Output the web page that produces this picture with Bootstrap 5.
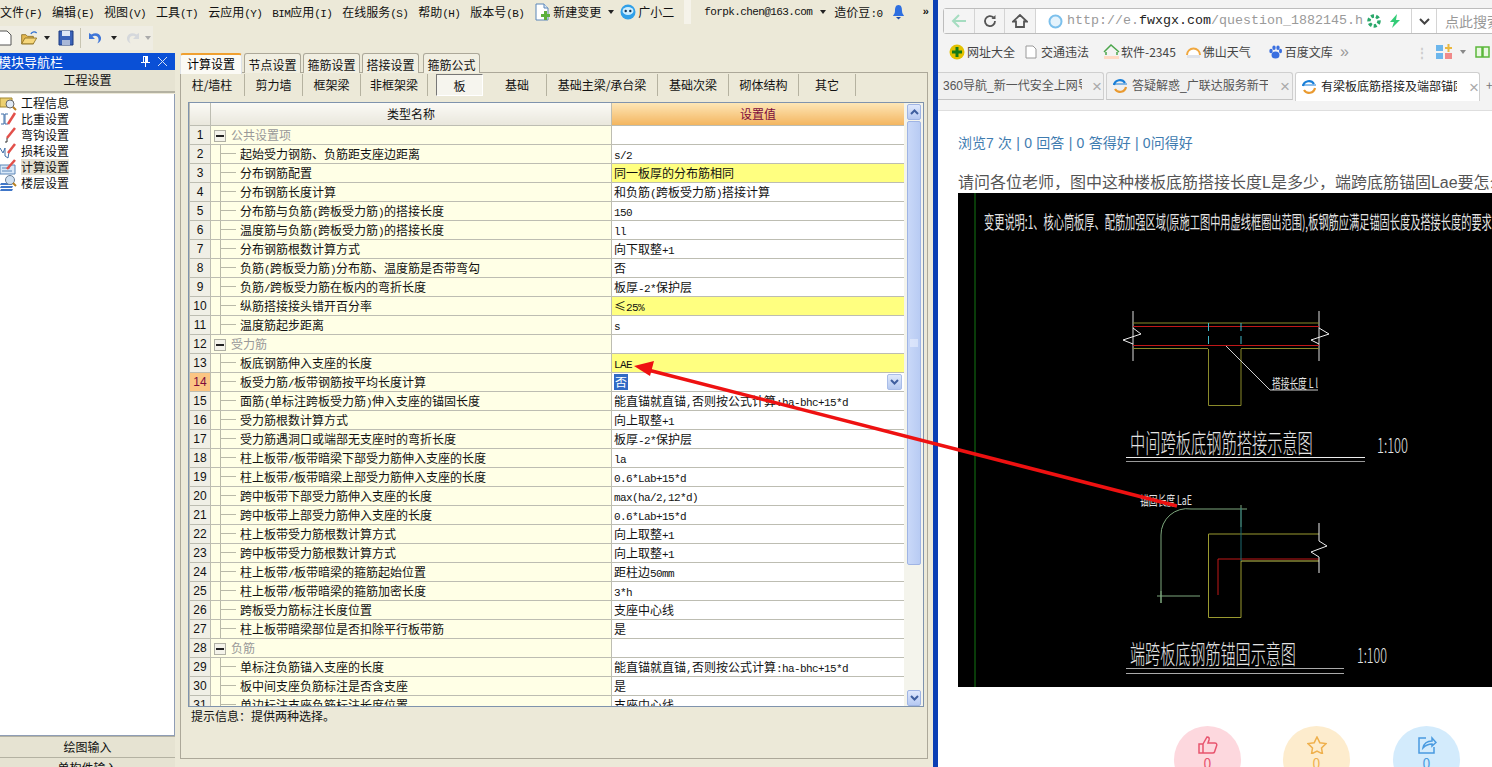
<!DOCTYPE html>
<html lang="zh">
  <head>
    <meta charset="utf-8" />
    <title>计算设置</title>
    <link href="https://cdn.jsdelivr.net/npm/bootstrap@5.3.3/dist/css/bootstrap.min.css" rel="stylesheet" />
    <style>
      html, body { height: 767px; overflow: hidden; margin: 0; }
      body { font-family: "Noto Sans CJK SC", sans-serif; font-size: 12px; line-height: 16px; color: #111; background: #fff; }
      .latin { font-family: "Liberation Mono", monospace; font-size: 11px; letter-spacing: -0.6px; line-height: 0; }
      svg { display: block; flex: none; }

      .screen { width: 1492px; height: 767px; }
      .app-pane { width: 938px; height: 767px; flex: none; background: #ece9d8; border-right: 5px solid #0b3fb4; overflow: hidden; }
      .menu-row { height: 26px; padding-bottom: 2px; gap: 10px; white-space: nowrap; flex: none; }
      .tool-row { height: 24px; width: 153px; background: #efede3; gap: 4px; flex: none; }
      .tool-sep { width: 1px; height: 20px; background: #c8c5b2; margin: 0 2px; }
      .caret-down { width: 0; height: 0; border: 3px solid transparent; border-top: 4px solid #222; border-bottom: 0; flex: none; }
      .caret-off { border-top-color: #aaa; }
      .work-row { margin-top: 3px; height: 714px; flex: none; }

      .nav-side { width: 175px; flex: none; height: 714px; overflow: hidden; }
      .dock-title { height: 17px; flex: none; background: #0a50d6; color: #fff; font-size: 13px; padding-right: 8px; margin-left: -2px; overflow: hidden; }
      .side-head { height: 23px; flex: none; line-height: 20px; text-align: center; background: #e6e3d2; border-bottom: 2px solid #b4b2a2; }
      .side-list { height: 642px; flex: none; background: #fff; border-right: 1px solid #8f9db5; border-bottom: 1px solid #8f9db5; border-radius: 0; display: block; margin-top: 1px; padding-top: 1px; }
      .side-list .list-group-item { border: 0; padding: 0; height: 16px; background: transparent; gap: 4px; font-size: 12px; line-height: 16px; color: #111; }
      .side-on { background: #e4e1d2; }
      .side-btn { height: 21px; flex: none; line-height: 20px; text-align: center; background: #e6e3d2; border-top: 1px solid #b4b2a2; }

      .settings-pane { width: 748px; margin-left: 5px; flex: none; }
      .top-tabs { height: 20px; border: 0; gap: 2px; flex-wrap: nowrap; }
      .top-tabs .nav-link { height: 20px; padding: 3px 0 0; margin: 0; width: 57px; text-align: center; background: #f1efe2; color: #111; border: 1px solid #aca899; border-bottom: 0; border-radius: 3px 3px 0 0; font-size: 12px; line-height: 16px; }
      .top-tabs .nav-link.active { width: 62px; height: 21px; background: #fbfaf5; border-top: 2px solid #f0a030; padding-top: 1px; position: relative; z-index: 1; }
      .top-tabs .nav-item:last-child { margin-left: 2px; }
      .tab-body { height: 687px; margin-top: -1px; border: 1px solid #aca899; background: #ece9d8; padding: 0 1px 0 7px; }
      .sub-tabs { height: 29px; padding-top: 1px; align-items: flex-start; }
      .sub-tab { height: 22px; line-height: 22px; text-align: center; border-right: 1px solid #b5b2a0; flex: none; white-space: nowrap; }
      .sub-first { padding-right: 8px; }
      .sub-press { height: 22px; line-height: 22px; width: 47px; margin-left: 8px; margin-right: 5px; text-align: center; background: #f6f5ee; border: 1px solid #fff; border-top-color: #777; border-left-color: #777; flex: none; }
      .grid-frame { height: 605px; width: 736px; border: 1px solid #7f93ad; background: #fff; overflow: hidden; }
      .grid-scroll { width: 715px; overflow: hidden; flex: none; }
      .grid-table { table-layout: fixed; width: 715px; margin: 0; border-collapse: collapse; --bs-table-bg: transparent; }
      .grid-table.table > * > * > * { padding: 0 2px; border: 1px solid #bdbdb2; border-top: 0; height: 19px; line-height: 16px; font-size: 12px; font-weight: 400; color: #111; white-space: nowrap; overflow: hidden; vertical-align: middle; box-shadow: none; }
      .grid-table.table thead th { height: 22px; background: linear-gradient(#fbfaf6, #e9e7dc); text-align: center; }
      .grid-table.table thead th.head-val { background: linear-gradient(#fde6b6, #f3b560); color: #7c0a3c; }
      .grid-table.table td.row-no { background: #f0efe6; text-align: center; font-family: "Liberation Sans", sans-serif; padding: 0; }
      .grid-table.table td.row-no-on { background: #fbc583; color: #7c0a3c; }
      .grid-table.table td.name-cell { background: linear-gradient(#b9b9a8, #b9b9a8) 9px 0 / 1px 100% no-repeat, linear-gradient(#b9b9a8, #b9b9a8) 9px 50% / 16px 1px no-repeat, #ffffe6; padding-left: 29px; }
      .grid-table.table td.group-cell { background: #ffffe6; color: #999; padding-left: 3px; }
      .group-box { width: 12px; height: 12px; border: 1px solid #b0b0a4; margin-right: 5px; vertical-align: -2px; display: inline-block; background: linear-gradient(#222, #222) center / 8px 2px no-repeat, #f4f3ea; }
      .grid-table.table td.val-cell { background: #fff; }
      .grid-table.table td.val-mark { background: #ffff80; }
      .val-pick { background: #316ac5; color: #fff; padding: 0 1px; }
      .combo-btn { width: 15px; height: 16px; background: linear-gradient(#e0e9fb, #b4c8f0); border: 1px solid #a9bde8; border-radius: 2px; }
      .bar-col { width: 19px; flex: none; background: #f4f4ec; padding: 1px 2px 0 3px; }
      .bar-btn { height: 16px; background: linear-gradient(#dfe8fc, #b6c9f2); border: 1px solid #9fb4e4; border-radius: 2px; flex: none; }
      .bar-thumb { height: 444px; margin: 1px 0; background: linear-gradient(90deg, #c9d8f8, #b8cbf3); border: 1px solid #9fb4e4; border-radius: 2px; flex: none; }
      .hint-line { padding: 1px 0 0 3px; }

      .web-pane { flex: 1 1 auto; min-width: 0; height: 767px; position: relative; overflow: hidden; }
      .chrome-top { height: 111px; background: #f3f3f3; border-bottom: 1px solid #dedede; overflow: hidden; }
      .addr-bar { height: 26px; margin: 8px 0 0 5px; width: 600px; background: #fff; border: 1px solid #bdbdbd; border-radius: 3px; }
      .addr-seg { height: 24px; border-right: 1px solid #d4d4d4; background: #f4f4f4; flex: none; }
      .addr-url { width: 376px; height: 24px; gap: 4px; padding-left: 12px; border-right: 1px solid #d4d4d4; flex: none; }
      .url-text { font-family: "Liberation Mono", monospace; font-size: 13.33px; color: #9a9a9a; width: 296px; overflow: hidden; white-space: nowrap; }
      .url-host { color: #222; }
      .search-hint { padding-left: 8px; color: #999; font-size: 14px; white-space: nowrap; }
      .mark-row { height: 26px; margin-top: 5px; padding-left: 11px; color: #444; white-space: nowrap; }
      .mark-row span { font-size: 12px; }
      .tab-row { height: 28px; margin-top: 7px; }
      .web-tab { width: 187px; height: 28px; flex: none; background: #f0f0f0; border: 1px solid #cfcfcf; border-bottom-color: #c4c4c4; border-radius: 3px 3px 0 0; margin-right: 2px; padding: 0 5px; gap: 4px; color: #555; white-space: nowrap; overflow: hidden; font-family: "Liberation Sans", "Noto Sans CJK SC", sans-serif; }
      .web-tab-first { width: 166px; padding-left: 5px; border-left: 0; border-radius: 0 3px 0 0; gap: 2px; }
      .web-tab-on { width: 185px; height: 29px; background: #fff; color: #222; border-bottom: 0; }
      .web-tab-text { width: 136px; overflow: hidden; flex: none; }
      .web-tab-first .web-tab-text { width: 139px; }
      .web-tab-close { color: #aaa; font-size: 17px; margin-left: 8px; font-family: "Liberation Sans", sans-serif; font-weight: 400; line-height: 1; }
      .page-body { padding: 24px 0 0 20px; background: #fff; }
      .read-stats { color: #3f7cb0; font-size: 14px; line-height: 16px; word-spacing: 0.4px; font-family: "Liberation Sans", "Noto Sans CJK SC", sans-serif; white-space: nowrap; }
      .question-text { margin: 22px 0 0; color: #555; font-size: 16px; line-height: 20px; height: 20px; white-space: nowrap; font-family: "Liberation Sans", "Noto Sans CJK SC", sans-serif; }
      .cad-shot { width: 534px; height: 494px; background: #000; }
      .cad-shot text { font-family: "Noto Sans CJK SC", sans-serif; fill: #e4e4e4; }
      .action-row { padding-left: 216px; margin-top: 39px; gap: 42px; }
      .action-dot { width: 67px; height: 67px; flex: none; padding-top: 10px; font-size: 14px; line-height: 18px; text-align: center; }
      .dot-like { background: #fdd8de; color: #e8546e; }
      .dot-star { background: #fdeccd; color: #efb04d; margin-right: 1px; }
      .dot-share { background: #d3ebfc; color: #4a9be0; }
      .arrow-layer { position: absolute; left: 0; top: 0; width: 1492px; height: 767px; pointer-events: none; z-index: 5; }
    </style>
  </head>
  <body>
    <div class="screen d-flex position-relative">
      <div class="app-pane d-flex flex-column">
        <div class="menu-row d-flex align-items-center">
          <div>文件<span class="latin">(F)</span></div>
          <div>编辑<span class="latin">(E)</span></div>
          <div>视图<span class="latin">(V)</span></div>
          <div>工具<span class="latin">(T)</span></div>
          <div>云应用<span class="latin">(Y)</span></div>
          <div><span class="latin">BIM</span>应用<span class="latin">(I)</span></div>
          <div>在线服务<span class="latin">(S)</span></div>
          <div>帮助<span class="latin">(H)</span></div>
          <div>版本号<span class="latin">(B)</span></div>
          <div class="d-flex align-items-center" style="gap:3px">
            <svg width="16" height="18" viewBox="0 0 16 18"><path d="M2 1h8l4 4v12H2z" fill="#fff" stroke="#5a86b8"/><path d="M10 1v4h4" fill="#dbe8f6" stroke="#5a86b8"/><path d="M7 11h3V8h3v3h3v3h-3v3h-3v-3H7z" fill="#5cb03c"/></svg>
            <span>新建变更</span>
            <span class="caret-down ms-1"></span>
          </div>
          <div class="d-flex align-items-center" style="margin-left:-4px;gap:2px">
            <svg width="16" height="16" viewBox="0 0 16 16"><circle cx="8" cy="8" r="7.500" fill="#2f9fe8"/><ellipse cx="8" cy="7" rx="5.500" ry="4" fill="#cdeeff"/><circle cx="5.700" cy="7" r="1.200" fill="#135"/><circle cx="10.300" cy="7" r="1.200" fill="#135"/></svg>
            <span>广小二</span>
          </div>
          <div style="width:7px;height:24px;background:#f5f3ea"></div>
          <div class="d-flex align-items-center" style="margin-left:3px"><span class="latin">forpk.chen@163.com</span><span class="caret-down" style="margin-left:8px"></span></div>
          <div style="margin-left:-2px">造价豆<span class="latin">:0</span></div>
          <svg width="13" height="16" viewBox="0 0 13 16"><path d="M6.500 1C3.500 1 3 4 3 7c0 3-2 4-2 5h11c0-1-2-2-2-5 0-3-.5-6-3.500-6z" fill="#2e6fe0"/><path d="M4 13h5l-2.500 2.500z" fill="#1d4aa8"/></svg>
          <span class="latin" style="margin-left:7px;font-weight:700">&raquo;</span>
        </div>
        <div class="tool-row d-flex align-items-center">
          <svg width="12" height="16" viewBox="0 0 12 16"><path d="M-2 1h9l4 4v10H-2z" fill="#fff" stroke="#555"/></svg>
          <svg width="20" height="16" viewBox="0 0 24 18" class="ms-1"><path d="M2 16V5h5l2 2h7v9z" fill="#e4b850" stroke="#8a6d20"/><path d="M2 16l4-7h14l-4 7z" fill="#f6d77c" stroke="#8a6d20"/><path d="M13 4c2-3 5-3 7-1" fill="none" stroke="#2f6fd0" stroke-width="1.500"/></svg>
          <span class="caret-down"></span>
          <svg width="16" height="16" viewBox="0 0 16 16" class="ms-1"><path d="M1 1h14v14H1z" fill="#3b62b8" stroke="#1d3a80"/><path d="M4 1h8v5H4z" fill="#dfe6f5"/><path d="M4 10h8v5H4z" fill="#a9b8d8"/></svg>
          <span class="tool-sep"></span>
          <svg width="16" height="16" viewBox="0 0 16 16"><path d="M2 3v6h6L5.500 6.500C8 5 11 6 11.500 9c.3 2-.5 3.500-1.500 4.500 3-1 4.500-3.500 4-6C13 3 8 2 4.500 4.500z" fill="#3f76d8"/></svg>
          <span class="caret-down ms-1"></span>
          <svg width="16" height="16" viewBox="0 0 16 16" class="ms-1"><path d="M14 3v6H8l2.500-2.500C8 5 5 6 4.500 9c-.3 2 .5 3.500 1.500 4.500-3-1-4.500-3.500-4-6C3 3 8 2 11.500 4.500z" fill="#d5d8dc"/></svg>
          <span class="caret-down caret-off"></span>
        </div>
        <div class="work-row d-flex">
          <div class="nav-side d-flex flex-column">
            <div class="dock-title d-flex align-items-center justify-content-between">
              <span>模块导航栏</span>
              <span class="d-flex align-items-center gap-2">
                <svg width="9" height="11" viewBox="0 0 9 11"><path d="M2 0h5v6h2v1H5v4H4V7H0V6h2zM3 1v5h1V1z" fill="#fff"/></svg>
                <svg width="9" height="9" viewBox="0 0 9 9"><path d="M0 0l9 9M9 0L0 9" stroke="#d5e0f5" stroke-width="1"/></svg>
              </span>
            </div>
            <div class="side-head">工程设置</div>
            <ul class="list-group side-list">
              <li class="list-group-item d-flex align-items-center">
                <svg width="17" height="16" viewBox="0 0 17 16"><path d="M0 3h12v9H0z" fill="#ecd070" stroke="#a08630"/><circle cx="10" cy="9" r="4" fill="#dfe9f5" stroke="#666"/><path d="M13 12l3 3" stroke="#b88020" stroke-width="2"/></svg>
                <span>工程信息</span>
              </li>
              <li class="list-group-item d-flex align-items-center">
                <svg width="17" height="16" viewBox="0 0 17 16"><path d="M1 3h3v10H1M8 3H5v10h3" fill="none" stroke="#3f6ea8"/><path d="M8 13L15 2" stroke="#e2504a" stroke-width="2.500"/></svg>
                <span>比重设置</span>
              </li>
              <li class="list-group-item d-flex align-items-center">
                <svg width="17" height="16" viewBox="0 0 17 16"><path d="M7 11L15 1" stroke="#e2504a" stroke-width="2.500"/><path d="M7 11v4h-2" fill="none" stroke="#333"/></svg>
                <span>弯钩设置</span>
              </li>
              <li class="list-group-item d-flex align-items-center">
                <svg width="17" height="16" viewBox="0 0 17 16"><path d="M0 5l3 5 2-5v8l3 2 1-6" fill="none" stroke="#3f6ea8"/><path d="M8 10L15 1" stroke="#e2504a" stroke-width="2.500"/></svg>
                <span>损耗设置</span>
              </li>
              <li class="list-group-item d-flex align-items-center">
                <svg width="17" height="16" viewBox="0 0 17 16"><path d="M0 6h15v9H0z" fill="#d9e8f8" stroke="#5a86b8"/><path d="M2 9h8M2 12h10" stroke="#5a86b8"/><path d="M7 10L15 1" stroke="#e2504a" stroke-width="2.500"/></svg>
                <span class="side-on">计算设置</span>
              </li>
              <li class="list-group-item d-flex align-items-center">
                <svg width="17" height="16" viewBox="0 0 17 16"><path d="M1 8h12l-1 2H0zM1 11h12l-1 2H0zM1 14h12l-1 2H0z" fill="#3f76c8"/><circle cx="10" cy="5" r="4.500" fill="#cfe0f2" stroke="#6a7f98"/><path d="M13 8l3 3" stroke="#b88020" stroke-width="2"/></svg>
                <span>楼层设置</span>
              </li>
            </ul>
            <div class="side-btn">绘图输入</div>
            <div class="side-btn">单构件输入</div>
          </div>
          <div class="settings-pane">
            <ul class="nav nav-tabs top-tabs">
              <li class="nav-item"><a class="nav-link active" href="#">计算设置</a></li>
              <li class="nav-item"><a class="nav-link" href="#">节点设置</a></li>
              <li class="nav-item"><a class="nav-link" href="#">箍筋设置</a></li>
              <li class="nav-item"><a class="nav-link" href="#">搭接设置</a></li>
              <li class="nav-item"><a class="nav-link" href="#">箍筋公式</a></li>
            </ul>
            <div class="tab-body">
              <div class="sub-tabs d-flex" id="subtabs"></div>
              <div class="grid-frame d-flex">
                <div class="grid-scroll">
                  <table class="table grid-table">
                    <colgroup><col width="21" /><col width="401" /><col width="293" /></colgroup>
                    <thead>
                      <tr><th></th><th>类型名称</th><th class="head-val">设置值</th></tr>
                    </thead>
                    <tbody id="data"></tbody>
                  </table>
                </div>
                <div class="bar-col d-flex flex-column">
                  <div class="bar-btn d-flex align-items-center justify-content-center">
                    <svg width="9" height="6" viewBox="0 0 9 6"><path d="M1 5l3.500-3.500L8 5" fill="none" stroke="#3f5f9f" stroke-width="2"/></svg>
                  </div>
                  <div class="bar-thumb d-flex align-items-center justify-content-center">
                    <svg width="8" height="8" viewBox="0 0 8 8"><path d="M0 1h8M0 3h8M0 5h8M0 7h8" stroke="#f0f4ff"/></svg>
                  </div>
                  <div class="flex-grow-1"></div>
                  <div class="bar-btn d-flex align-items-center justify-content-center">
                    <svg width="9" height="6" viewBox="0 0 9 6"><path d="M1 1l3.500 3.500L8 1" fill="none" stroke="#3f5f9f" stroke-width="2"/></svg>
                  </div>
                </div>
              </div>
              <div class="hint-line">提示信息&#65306;提供两种选择。</div>
            </div>
          </div>
        </div>
      </div>

      <div class="web-pane">
        <div class="chrome-top">
          <div class="addr-bar d-flex align-items-center">
            <div class="addr-seg d-flex align-items-center justify-content-center" style="width:31px">
              <svg width="16" height="14" viewBox="0 0 16 14"><path d="M8 1L2 7l6 6M2 7h13" fill="none" stroke="#a5dcc0" stroke-width="2"/></svg>
            </div>
            <div class="addr-seg d-flex align-items-center justify-content-center" style="width:30px">
              <svg width="14" height="14" viewBox="0 0 14 14"><path d="M12 7a5 5 0 1 1-1.500-3.500" fill="none" stroke="#555" stroke-width="1.800"/><path d="M12.500 1v4h-4z" fill="#555"/></svg>
            </div>
            <div class="addr-seg d-flex align-items-center justify-content-center" style="width:31px">
              <svg width="16" height="14" viewBox="0 0 16 14"><path d="M8 1L1 7.500h3V13h8V7.500h3z" fill="none" stroke="#555" stroke-width="1.800"/></svg>
            </div>
            <div class="addr-url d-flex align-items-center">
              <svg width="15" height="15" viewBox="0 0 15 15"><circle cx="7.500" cy="7.500" r="6" fill="#e5f3fc" stroke="#7cc0ec" stroke-width="2"/></svg>
              <span class="url-text">http://e.<span class="url-host">fwxgx.com</span>/question_1882145.h</span>
              <svg width="14" height="14" viewBox="0 0 14 14"><circle cx="7" cy="7" r="5" fill="none" stroke="#2aa86a" stroke-width="3.500" stroke-dasharray="3 2"/></svg>
              <svg width="12" height="14" viewBox="0 0 12 14" class="ms-1"><path d="M8 0L1 8h4l-2 6 8-8H7z" fill="#33cc77"/></svg>
            </div>
            <div class="d-flex align-items-center justify-content-center" style="width:25px;height:24px;border-right:1px solid #d4d4d4">
              <svg width="11" height="7" viewBox="0 0 11 7"><path d="M1 1l4.500 4.500L10 1" fill="none" stroke="#444" stroke-width="2"/></svg>
            </div>
            <div class="search-hint">点此搜索</div>
          </div>
          <div class="mark-row d-flex align-items-center">
            <svg width="16" height="16" viewBox="0 0 16 16"><circle cx="8" cy="8" r="7.500" fill="#e3c200"/><path d="M6.500 3h3v3.500H13v3H9.500V13h-3V9.500H3v-3h3.500z" fill="#167a16"/></svg>
            <span style="margin-left:2px">网址大全</span>
            <svg width="12" height="14" viewBox="0 0 12 14" style="margin-left:10px"><path d="M1 1h7l3 3v9H1z" fill="#fff" stroke="#999"/></svg>
            <span style="margin-left:4px">交通违法</span>
            <svg width="17" height="16" viewBox="0 0 17 16" style="margin-left:14px"><path d="M1 8l7-7 8 7M3 8v3M14 8v3" fill="none" stroke="#4ca64c" stroke-width="1.500"/><path d="M1 12h15v3H1z" fill="#ffd9c4"/></svg>
            <span style="margin-left:1px">软件-2345</span>
            <svg width="15" height="14" viewBox="0 0 15 14" style="margin-left:10px"><path d="M1 10a6.500 6.500 0 0 1 13 0" fill="#fff" stroke="#f0a840" stroke-width="2"/><path d="M1 10h13v3H1z" fill="#dfe3ea"/></svg>
            <span style="margin-left:2px">佛山天气</span>
            <svg width="13" height="14" viewBox="0 0 13 14" style="margin-left:18px"><ellipse cx="2" cy="6" rx="1.700" ry="2.300" fill="#3a6fe0"/><ellipse cx="5" cy="2.800" rx="1.700" ry="2.300" fill="#3a6fe0"/><ellipse cx="9" cy="2.800" rx="1.700" ry="2.300" fill="#3a6fe0"/><ellipse cx="11.500" cy="6" rx="1.500" ry="2.300" fill="#3a6fe0"/><ellipse cx="6.500" cy="10" rx="4" ry="3.500" fill="#3a6fe0"/></svg>
            <span style="margin-left:3px">百度文库</span>
            <span style="margin-left:7px;color:#999;font-family:'Liberation Sans',sans-serif;font-size:16px">&raquo;</span>
            <span style="margin-left:67px;color:#ccc;font-weight:700">&#8942;</span>
            <svg width="16" height="16" viewBox="0 0 16 16" style="margin-left:8px"><path d="M0 1h7v6H0zM0 9h7v6H0z" fill="#6cb6ec"/><path d="M9 9h7v6H9z" fill="#f08a8a"/><path d="M12.500 0v8M9 4h7" stroke="#eab840" stroke-width="2"/></svg>
            <span class="caret-down" style="margin-left:8px;border-top-color:#888"></span>
            <svg width="15" height="14" viewBox="0 0 15 14" style="margin-left:9px"><path d="M1 2h6v10H1zM8 2h6v10H8z" fill="#eaf8e2" stroke="#5cb83c" stroke-width="1.500"/></svg>
            <svg width="8" height="14" viewBox="0 0 8 14" style="margin-left:6px"><path d="M1 1h7v12H1z" fill="#fff" stroke="#e08a8a"/></svg>
          </div>
          <div class="tab-row d-flex">
            <div class="web-tab web-tab-first d-flex align-items-center">
              <span class="web-tab-text">360导航_新一代安全上网导航</span>
              <span class="web-tab-close">&times;</span>
            </div>
            <div class="web-tab d-flex align-items-center">
              <svg width="16" height="16" viewBox="0 0 16 16"><path d="M2 7a6 6 0 0 1 11-2" fill="none" stroke="#1a7fd8" stroke-width="2.200"/><path d="M14 9a6 6 0 0 1-11 2" fill="none" stroke="#e99a30" stroke-width="2.200"/><path d="M1 6h14" stroke="#1a7fd8" stroke-width="1"/></svg>
              <span class="web-tab-text">答疑解惑_广联达服务新干线</span>
              <span class="web-tab-close">&times;</span>
            </div>
            <div class="web-tab web-tab-on d-flex align-items-center">
              <svg width="16" height="16" viewBox="0 0 16 16"><path d="M2 7a6 6 0 0 1 11-2" fill="none" stroke="#1a7fd8" stroke-width="2.200"/><path d="M14 9a6 6 0 0 1-11 2" fill="none" stroke="#e99a30" stroke-width="2.200"/><path d="M1 6h14" stroke="#1a7fd8" stroke-width="1"/></svg>
              <span class="web-tab-text">有梁板底筋搭接及端部锚固</span>
              <span class="web-tab-close">&times;</span>
            </div>
            <span style="margin-left:4px;color:#777;line-height:26px">+</span>
          </div>
        </div>
        <div class="page-body">
          <div class="read-stats">浏览7 次 | 0 回答 | 0 答得好 | 0问得好</div>
          <p class="question-text">请问各位老师&#65292;图中这种楼板底筋搭接长度L是多少&#65292;端跨底筋锚固Lae要怎么计算</p>
          <svg class="cad-shot" viewBox="0 0 534 494">
            <path d="M17 0v494" stroke="#0c4f0c" stroke-width="1.500"/>
            <text x="26" y="36" font-size="18" data-w="508">变更说明:1、核心筒板厚、配筋加强区域(原施工图中用虚线框圈出范围),板钢筋应满足锚固长度及搭接长度的要求</text>

            <path d="M175 118v50M361 118v50" stroke="#ddd"/>
            <path d="M175 135l8 6-18 6 10 4M361 135l10 6-18 6 8 4" fill="none" stroke="#eee"/>
            <path d="M175 130h186M175 155.500h75M283 155.500h78" stroke="#8a8a2a"/>
            <path d="M175 133.500h186M175 152.500h186" stroke="#c01818"/>
            <path d="M250.500 130v26M283 130v26" stroke="#40b8c8" stroke-dasharray="8 5"/>
            <path d="M250.500 156v56.500H283V156" fill="none" stroke="#8a8a2a"/>
            <path d="M268 153l44 44h48" fill="none" stroke="#ccc"/>
            <text x="314" y="195" font-size="13" data-w="46">搭接长度 L l</text>
            <text x="172" y="260" font-size="26" data-w="183" font-weight="300">中间跨板底钢筋搭接示意图</text>
            <path d="M168 264.500h239" stroke="#eee"/>
            <path d="M168 268.500h239" stroke="#999"/>
            <text x="419" y="260" font-size="20" data-w="31" font-weight="300">1:100</text>

            <text x="182" y="312" font-size="13" data-w="52">锚固长度 LaE</text>
            <path d="M203 410v-68a26 26 0 0 1 30-26h56M283 312v22M199 403h43M203 398v12" fill="none" stroke="#7ea87e"/>
            <path d="M250.500 341H361M250.500 341v83.500H283V368" fill="none" stroke="#9a9a30"/>
            <path d="M283 368h78" stroke="#c8c850"/>
            <path d="M260 402v-36h101" fill="none" stroke="#c01818"/>
            <path d="M283 315v53" stroke="#1e6a70"/>
            <path d="M361 330v18l8 5-16 6 8 5v16" fill="none" stroke="#eee"/>
            <text x="172" y="471" font-size="26" data-w="166" font-weight="300">端跨板底钢筋锚固示意图</text>
            <path d="M168 475.500h218M168 480.500h218" stroke="#aaa"/>
            <text x="399" y="470" font-size="20" data-w="30" font-weight="300">1:100</text>
          </svg>
          <div class="action-row d-flex">
            <div class="action-dot rounded-circle dot-like d-flex flex-column align-items-center">
              <svg width="20" height="18" viewBox="0 0 20 18"><path d="M1 8h4v9H1zM5 8l4-7c2 0 2.500 1 2 3l-1 3h7c2 0 2 2 1.500 3l-2 6c-.3 1-1 1-2 1H5" fill="none" stroke="#e8546e" stroke-width="1.500"/></svg>
              <span>0</span>
            </div>
            <div class="action-dot rounded-circle dot-star d-flex flex-column align-items-center">
              <svg width="20" height="18" viewBox="0 0 20 18"><path d="M10 1l2.800 5.700 6.200.9-4.500 4.300 1 6-5.500-2.900L4.500 18l1-6L1 7.600l6.200-.9z" fill="none" stroke="#efb04d" stroke-width="1.500"/></svg>
              <span>0</span>
            </div>
            <div class="action-dot rounded-circle dot-share d-flex flex-column align-items-center">
              <svg width="20" height="18" viewBox="0 0 20 18"><path d="M9 2H2v15h15v-6" fill="none" stroke="#4a9be0" stroke-width="1.500"/><path d="M6 12c1-5 5-7 9-7V2l4 4.500L15 10V8c-3 0-6 1-9 4z" fill="none" stroke="#4a9be0" stroke-width="1.500"/></svg>
              <span>0</span>
            </div>
          </div>
        </div>
      </div>

      <svg class="arrow-layer" viewBox="0 0 1492 767">
        <path d="M1177 506L650 370.500" stroke="#ee1111" stroke-width="3.500"/>
        <path d="M634 366l20-5-4 15z" fill="#ee1111"/>
      </svg>
    </div>

    <script src="https://cdn.jsdelivr.net/npm/bootstrap@5.3.3/dist/js/bootstrap.bundle.min.js"></script>
    <script>
      // half width runs go in the mono font so they stay 6px like the original
      function latin(text) {
        return text.replace(/[\x21-\x7e]+/g, (m) => `<span class="latin">${m}</span>`);
      }

      const subTabs = [
        ["柱/墙柱", 57, "sub-first"], ["剪力墙", 58], ["框架梁", 58], ["非框架梁", 67], ["板", 0],
        ["基础", 59], ["基础主梁/承台梁", 111], ["基础次梁", 71], ["砌体结构", 70], ["其它", 57]
      ];
      let tabs = "";
      subTabs.forEach(([name, w, extra]) => {
        if (w === 0) {
          tabs += `<div class="sub-press">${name}</div>`;
        } else {
          tabs += `<div class="sub-tab ${extra || ""}" style="width:${w}px">${name}</div>`;
        }
      });
      document.getElementById("subtabs").innerHTML = tabs;

      // [name, value, kind]  g = group row, m = marked yellow, p = picked cell
      const rows = [
        ["公共设置项", "", "g"],
        ["起始受力钢筋、负筋距支座边距离", "s/2"],
        ["分布钢筋配置", "同一板厚的分布筋相同", "m"],
        ["分布钢筋长度计算", "和负筋(跨板受力筋)搭接计算"],
        ["分布筋与负筋(跨板受力筋)的搭接长度", "150"],
        ["温度筋与负筋(跨板受力筋)的搭接长度", "ll"],
        ["分布钢筋根数计算方式", "向下取整+1"],
        ["负筋(跨板受力筋)分布筋、温度筋是否带弯勾", "否"],
        ["负筋/跨板受力筋在板内的弯折长度", "板厚-2*保护层"],
        ["纵筋搭接接头错开百分率", "≤25%", "m"],
        ["温度筋起步距离", "s"],
        ["受力筋", "", "g"],
        ["板底钢筋伸入支座的长度", "LAE", "m"],
        ["板受力筋/板带钢筋按平均长度计算", "否", "p"],
        ["面筋(单标注跨板受力筋)伸入支座的锚固长度", "能直锚就直锚,否则按公式计算:ha-bhc+15*d"],
        ["受力筋根数计算方式", "向上取整+1"],
        ["受力筋遇洞口或端部无支座时的弯折长度", "板厚-2*保护层"],
        ["柱上板带/板带暗梁下部受力筋伸入支座的长度", "la"],
        ["柱上板带/板带暗梁上部受力筋伸入支座的长度", "0.6*Lab+15*d"],
        ["跨中板带下部受力筋伸入支座的长度", "max(ha/2,12*d)"],
        ["跨中板带上部受力筋伸入支座的长度", "0.6*Lab+15*d"],
        ["柱上板带受力筋根数计算方式", "向上取整+1"],
        ["跨中板带受力筋根数计算方式", "向上取整+1"],
        ["柱上板带/板带暗梁的箍筋起始位置", "距柱边50mm"],
        ["柱上板带/板带暗梁的箍筋加密长度", "3*h"],
        ["跨板受力筋标注长度位置", "支座中心线"],
        ["柱上板带暗梁部位是否扣除平行板带筋", "是"],
        ["负筋", "", "g"],
        ["单标注负筋锚入支座的长度", "能直锚就直锚,否则按公式计算:ha-bhc+15*d"],
        ["板中间支座负筋标注是否含支座", "是"],
        ["单边标注支座负筋标注长度位置", "支座中心线"]
      ];

      let content = "";
      rows.forEach(([name, value, kind], i) => {
        const noClass = kind === "p" ? "row-no row-no-on" : "row-no";
        let nameCell = `<td class="name-cell">${latin(name)}</td>`;
        if (kind === "g") {
          nameCell = `<td class="group-cell"><span class="group-box"></span>${name}</td>`;
        }
        let valCell = `<td class="val-cell">${latin(value)}</td>`;
        if (kind === "m") {
          valCell = `<td class="val-cell val-mark">${latin(value)}</td>`;
        }
        if (kind === "p") {
          valCell = `<td class="val-cell"><div class="d-flex align-items-center justify-content-between">
            <span class="val-pick">${value}</span>
            <span class="combo-btn d-flex align-items-center justify-content-center"><svg width="9" height="6" viewBox="0 0 9 6"><path d="M1 1l3.500 3.500L8 1" fill="none" stroke="#3f5f9f" stroke-width="2"/></svg></span>
          </div></td>`;
        }
        content += `<tr><td class="${noClass}">${i + 1}</td>${nameCell}${valCell}</tr>`;
      });
      document.getElementById("data").innerHTML = content;

      // the drawing's lettering is tall and narrow, squeeze each label to its measured width
      document.querySelectorAll(".cad-shot text").forEach((label) => {
        const x = label.getAttribute("x");
        const y = label.getAttribute("y");
        const k = label.dataset.w / label.getComputedTextLength();
        label.setAttribute("transform", `translate(${x} ${y}) scale(${k} 1) translate(${-x} ${-y})`);
      });
    </script>
  </body>
</html>
